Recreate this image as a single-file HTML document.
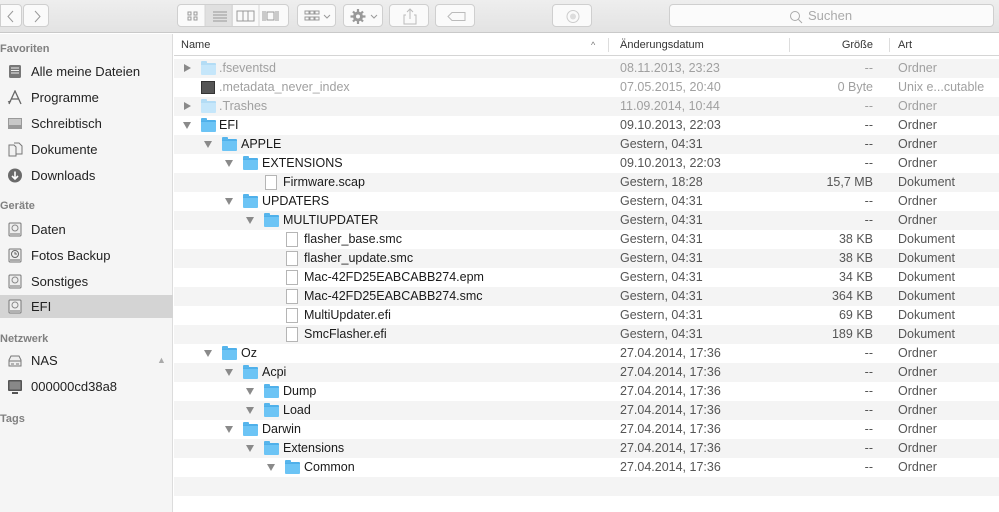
<!DOCTYPE html>
<html><head><meta charset="utf-8">
<style>
*{margin:0;padding:0;box-sizing:border-box}
body{width:999px;height:512px;overflow:hidden;font-family:"Liberation Sans",sans-serif;background:#fff;position:relative;color:#1a1a1a}
.tb{position:absolute;left:0;top:0;width:999px;height:33px;background:linear-gradient(#eeeeee,#e3e3e3);border-bottom:1px solid #c9c9c9}
.btn{position:absolute;top:4px;height:23px;border:1px solid #cfcfcf;border-radius:4px;background:#fafafa}
.sb{position:absolute;left:0;top:34px;width:173px;height:478px;background:#f5f5f5;border-right:1px solid #dcdcdc}
.sh{position:absolute;left:0;font-size:11px;color:#808080;font-weight:bold}
.si{position:absolute;left:0;width:173px;height:23px;font-size:13px;line-height:23px;padding-left:31px;color:#222}
.si .ic{position:absolute;left:7px;top:4px;width:16px;height:15px}
.hdr{position:absolute;left:174px;top:34px;width:825px;height:22px;border-bottom:1px solid #d5d5d5;font-size:11px;line-height:22px;color:#333;background:#fff}
.hdr span{position:absolute;top:0}
.hdr i{position:absolute;top:4px;width:1px;height:14px;background:#ddd}
.row{position:absolute;left:174px;width:825px;height:19px;font-size:12.5px;line-height:19px}
.row.g{background:#f4f4f4}
.row span{position:absolute;top:0;white-space:nowrap}
.row .d{left:446px;color:#555}
.row .s{right:126px;text-align:right;color:#555}
.row .k{left:724px;color:#555}
.row.dim span{color:#a0a0a0}
.tri{position:absolute;top:5px;width:0;height:0}
.tr{border-left:7px solid #8a8a8a;border-top:4px solid transparent;border-bottom:4px solid transparent}
.td{border-top:7px solid #8a8a8a;border-left:4.5px solid transparent;border-right:4.5px solid transparent;top:6px}
.fo{position:absolute;top:4px;width:15px;height:12px;background:#6cc4f5;border-radius:1px;border-top:2px solid #4fb0ea}
.fo::before{content:"";position:absolute;left:0;top:-4px;width:6px;height:3px;background:#56b5ec;border-radius:1px 1px 0 0}
.fo.l{background:#c5e6fa;border-top-color:#b3dcf5}
.fo.l::before{background:#b3dcf5}
.fi{position:absolute;top:2px;width:12px;height:15px;border:1px solid #b5b5b5;background:#fff}
.ex{position:absolute;top:3px;width:14px;height:13px;background:#555;border:1px solid #333}
</style></head><body>
<div class="tb">
 <div class="btn" style="left:0;width:22px;border-radius:0 4px 4px 0"><svg width="22" height="23"><path d="M12 6 L7 11.5 L12 17" stroke="#999" fill="none"/></svg></div>
 <div class="btn" style="left:23px;width:26px"><svg width="26" height="23"><path d="M11 6 L16 11.5 L11 17" stroke="#999" fill="none"/></svg></div>
 <div class="btn" style="left:177px;width:112px;background:#fafafa"></div>
 <div style="position:absolute;left:205px;top:5px;width:28px;height:21px;background:#e0e0e0"></div>
 <svg style="position:absolute;left:177px;top:4px" width="112" height="23">
  <g fill="none" stroke="#999"><rect x="11" y="8" width="3" height="3"/><rect x="17" y="8" width="3" height="3"/><rect x="11" y="13" width="3" height="3"/><rect x="17" y="13" width="3" height="3"/>
  <path d="M36 8h14M36 11h14M36 14h14M36 17h14"/><rect x="60" y="7" width="17" height="10"/><path d="M66 7v10M71 7v10"/>
  <path d="M86 7v10M88 7v10M101 7v10M99 7v10"/><rect x="90" y="8" width="7" height="8"/></g>
  <path d="M28 1v21M55 1v21M82 1v21" stroke="#d5d5d5"/></svg>
 <div class="btn" style="left:297px;width:39px"><svg width="39" height="23"><g fill="none" stroke="#999"><rect x="7" y="6" width="4" height="3"/><rect x="12" y="6" width="4" height="3"/><rect x="17" y="6" width="4" height="3"/><rect x="7" y="12" width="4" height="3"/><rect x="12" y="12" width="4" height="3"/><rect x="17" y="12" width="4" height="3"/><path d="M26 10l3 3 3-3"/></g></svg></div>
 <div class="btn" style="left:343px;width:40px"><svg width="40" height="23"><circle cx="14" cy="11.5" r="5" fill="#999"/><path d="M14 4v15M6.5 11.5h15M9 6.5l10 10M19 6.5l-10 10" stroke="#999" stroke-width="2.2"/><circle cx="14" cy="11.5" r="2" fill="#fafafa"/><path d="M27 10l3 3 3-3" fill="none" stroke="#999"/></svg></div>
 <div class="btn" style="left:389px;width:40px"><svg width="40" height="23"><path d="M16 10h-2v9h12v-9h-2M20 14V4M17 7l3-3 3 3" fill="none" stroke="#bbb"/></svg></div>
 <div class="btn" style="left:435px;width:40px"><svg width="40" height="23"><path d="M12 11.5l4-4h13v8h-13z" fill="none" stroke="#bbb"/></svg></div>
 <div class="btn" style="left:552px;width:40px"><svg width="40" height="23"><circle cx="20" cy="11.5" r="6" fill="none" stroke="#ccc"/><circle cx="20" cy="11.5" r="3" fill="#ddd"/></svg></div>
 <div class="btn" style="left:669px;width:325px;background:#fbfbfb"><svg style="position:absolute;left:119px;top:5px" width="14" height="14"><circle cx="6" cy="6" r="4.5" fill="none" stroke="#aaa"/><path d="M9.5 9.5l3.5 3.5" stroke="#aaa"/></svg><span style="position:absolute;left:138px;top:3px;font-size:13px;color:#aaa">Suchen</span></div>
</div>

<div class="sb">
 <div class="sh" style="top:9px">Favoriten</div>
 <div class="si" style="top:26px"><svg class="ic" viewBox="0 0 16 15"><rect x="2" y="1" width="12" height="13" rx="1.5" fill="#777"/><path d="M4 4h8M4 6.5h8M4 9h8" stroke="#eee"/></svg>Alle meine Dateien</div>
 <div class="si" style="top:52px"><svg class="ic" viewBox="0 0 16 15"><path d="M2 14L8 1l6 13M4 9h8M1 12l3-1" fill="none" stroke="#666" stroke-width="1.3"/></svg>Programme</div>
 <div class="si" style="top:78px"><svg class="ic" viewBox="0 0 16 15"><rect x="1" y="2" width="14" height="11" fill="#999"/><rect x="2" y="3" width="12" height="6" fill="#c8c8c8"/></svg>Schreibtisch</div>
 <div class="si" style="top:104px"><svg class="ic" viewBox="0 0 16 15"><path d="M2 3h5l2 2v9H2zM7 1h5l3 3v8H9" fill="#f2f2f2" stroke="#777"/></svg>Dokumente</div>
 <div class="si" style="top:130px"><svg class="ic" viewBox="0 0 16 15"><circle cx="8" cy="7.5" r="7" fill="#6a6a6a"/><path d="M8 3.5v7M5 8l3 3 3-3" stroke="#fff" stroke-width="1.6" fill="none"/></svg>Downloads</div>
 <div class="sh" style="top:166px">Geräte</div>
 <div class="si" style="top:184px"><svg class="ic" viewBox="0 0 16 15"><rect x="2" y="1" width="12" height="13" rx="1" fill="#eee" stroke="#777"/><circle cx="8" cy="6" r="3" fill="none" stroke="#888"/><path d="M3 12h10" stroke="#777"/></svg>Daten</div>
 <div class="si" style="top:210px"><svg class="ic" viewBox="0 0 16 15"><rect x="2" y="1" width="12" height="13" rx="1" fill="#eee" stroke="#777"/><circle cx="8" cy="6" r="3.5" fill="none" stroke="#666"/><path d="M8 4v2h2M3 12h10" stroke="#666" fill="none"/></svg>Fotos Backup</div>
 <div class="si" style="top:236px"><svg class="ic" viewBox="0 0 16 15"><rect x="2" y="1" width="12" height="13" rx="1" fill="#eee" stroke="#777"/><circle cx="8" cy="6" r="3" fill="none" stroke="#888"/><path d="M3 12h10" stroke="#777"/></svg>Sonstiges</div>
 <div class="si" style="top:261px;background:#d4d4d4"><svg class="ic" viewBox="0 0 16 15"><rect x="2" y="1" width="12" height="13" rx="1" fill="#eee" stroke="#777"/><circle cx="8" cy="6" r="3" fill="none" stroke="#888"/><path d="M3 12h10" stroke="#777"/></svg>EFI</div>
 <div class="sh" style="top:299px">Netzwerk</div>
 <div class="si" style="top:315px"><svg class="ic" viewBox="0 0 16 15"><path d="M2 7l2-4h8l2 4v6H2z" fill="#eee" stroke="#777"/><path d="M2 8h12M4 11h3M9 11h3" stroke="#777"/></svg>NAS<span style="position:absolute;left:157px;top:0;font-size:9px;color:#aaa">▲</span></div>
 <div class="si" style="top:341px"><svg class="ic" viewBox="0 0 16 15"><rect x="1" y="1" width="14" height="11" rx="1" fill="#555"/><rect x="2.5" y="2.5" width="11" height="8" fill="#888"/><path d="M5 14h6" stroke="#555" stroke-width="2"/></svg>000000cd38a8</div>
 <div class="sh" style="top:379px">Tags</div>
</div>

<div class="hdr">
 <span style="left:7px">Name</span>
 <span style="left:417px;font-size:9px;color:#777">^</span>
 <i style="left:434px"></i>
 <span style="left:446px">Änderungsdatum</span>
 <i style="left:615px"></i>
 <span style="right:126px">Größe</span>
 <i style="left:715px"></i>
 <span style="left:724px">Art</span>
</div>

<div class="row g dim" style="top:59px"><i class="tri tr" style="left:10px"></i><i class="fo l" style="left:27px"></i><span style="left:45px">.fseventsd</span><span class="d">08.11.2013, 23:23</span><span class="s">--</span><span class="k">Ordner</span></div>
<div class="row dim" style="top:78px"><i class="ex" style="left:27px"></i><span style="left:45px">.metadata_never_index</span><span class="d">07.05.2015, 20:40</span><span class="s">0 Byte</span><span class="k">Unix e...cutable</span></div>
<div class="row g dim" style="top:97px"><i class="tri tr" style="left:10px"></i><i class="fo l" style="left:27px"></i><span style="left:45px">.Trashes</span><span class="d">11.09.2014, 10:44</span><span class="s">--</span><span class="k">Ordner</span></div>
<div class="row" style="top:116px"><i class="tri td" style="left:9px"></i><i class="fo" style="left:27px"></i><span style="left:45px">EFI</span><span class="d">09.10.2013, 22:03</span><span class="s">--</span><span class="k">Ordner</span></div>
<div class="row g" style="top:135px"><i class="tri td" style="left:30px"></i><i class="fo" style="left:48px"></i><span style="left:67px">APPLE</span><span class="d">Gestern, 04:31</span><span class="s">--</span><span class="k">Ordner</span></div>
<div class="row" style="top:154px"><i class="tri td" style="left:51px"></i><i class="fo" style="left:69px"></i><span style="left:88px">EXTENSIONS</span><span class="d">09.10.2013, 22:03</span><span class="s">--</span><span class="k">Ordner</span></div>
<div class="row g" style="top:173px"><i class="fi" style="left:91px"></i><span style="left:109px">Firmware.scap</span><span class="d">Gestern, 18:28</span><span class="s">15,7 MB</span><span class="k">Dokument</span></div>
<div class="row" style="top:192px"><i class="tri td" style="left:51px"></i><i class="fo" style="left:69px"></i><span style="left:88px">UPDATERS</span><span class="d">Gestern, 04:31</span><span class="s">--</span><span class="k">Ordner</span></div>
<div class="row g" style="top:211px"><i class="tri td" style="left:72px"></i><i class="fo" style="left:90px"></i><span style="left:109px">MULTIUPDATER</span><span class="d">Gestern, 04:31</span><span class="s">--</span><span class="k">Ordner</span></div>
<div class="row" style="top:230px"><i class="fi" style="left:112px"></i><span style="left:130px">flasher_base.smc</span><span class="d">Gestern, 04:31</span><span class="s">38 KB</span><span class="k">Dokument</span></div>
<div class="row g" style="top:249px"><i class="fi" style="left:112px"></i><span style="left:130px">flasher_update.smc</span><span class="d">Gestern, 04:31</span><span class="s">38 KB</span><span class="k">Dokument</span></div>
<div class="row" style="top:268px"><i class="fi" style="left:112px"></i><span style="left:130px">Mac-42FD25EABCABB274.epm</span><span class="d">Gestern, 04:31</span><span class="s">34 KB</span><span class="k">Dokument</span></div>
<div class="row g" style="top:287px"><i class="fi" style="left:112px"></i><span style="left:130px">Mac-42FD25EABCABB274.smc</span><span class="d">Gestern, 04:31</span><span class="s">364 KB</span><span class="k">Dokument</span></div>
<div class="row" style="top:306px"><i class="fi" style="left:112px"></i><span style="left:130px">MultiUpdater.efi</span><span class="d">Gestern, 04:31</span><span class="s">69 KB</span><span class="k">Dokument</span></div>
<div class="row g" style="top:325px"><i class="fi" style="left:112px"></i><span style="left:130px">SmcFlasher.efi</span><span class="d">Gestern, 04:31</span><span class="s">189 KB</span><span class="k">Dokument</span></div>
<div class="row" style="top:344px"><i class="tri td" style="left:30px"></i><i class="fo" style="left:48px"></i><span style="left:67px">Oz</span><span class="d">27.04.2014, 17:36</span><span class="s">--</span><span class="k">Ordner</span></div>
<div class="row g" style="top:363px"><i class="tri td" style="left:51px"></i><i class="fo" style="left:69px"></i><span style="left:88px">Acpi</span><span class="d">27.04.2014, 17:36</span><span class="s">--</span><span class="k">Ordner</span></div>
<div class="row" style="top:382px"><i class="tri td" style="left:72px"></i><i class="fo" style="left:90px"></i><span style="left:109px">Dump</span><span class="d">27.04.2014, 17:36</span><span class="s">--</span><span class="k">Ordner</span></div>
<div class="row g" style="top:401px"><i class="tri td" style="left:72px"></i><i class="fo" style="left:90px"></i><span style="left:109px">Load</span><span class="d">27.04.2014, 17:36</span><span class="s">--</span><span class="k">Ordner</span></div>
<div class="row" style="top:420px"><i class="tri td" style="left:51px"></i><i class="fo" style="left:69px"></i><span style="left:88px">Darwin</span><span class="d">27.04.2014, 17:36</span><span class="s">--</span><span class="k">Ordner</span></div>
<div class="row g" style="top:439px"><i class="tri td" style="left:72px"></i><i class="fo" style="left:90px"></i><span style="left:109px">Extensions</span><span class="d">27.04.2014, 17:36</span><span class="s">--</span><span class="k">Ordner</span></div>
<div class="row" style="top:458px"><i class="tri td" style="left:93px"></i><i class="fo" style="left:111px"></i><span style="left:130px">Common</span><span class="d">27.04.2014, 17:36</span><span class="s">--</span><span class="k">Ordner</span></div>
<div class="row g" style="top:477px"></div>
</body></html>
